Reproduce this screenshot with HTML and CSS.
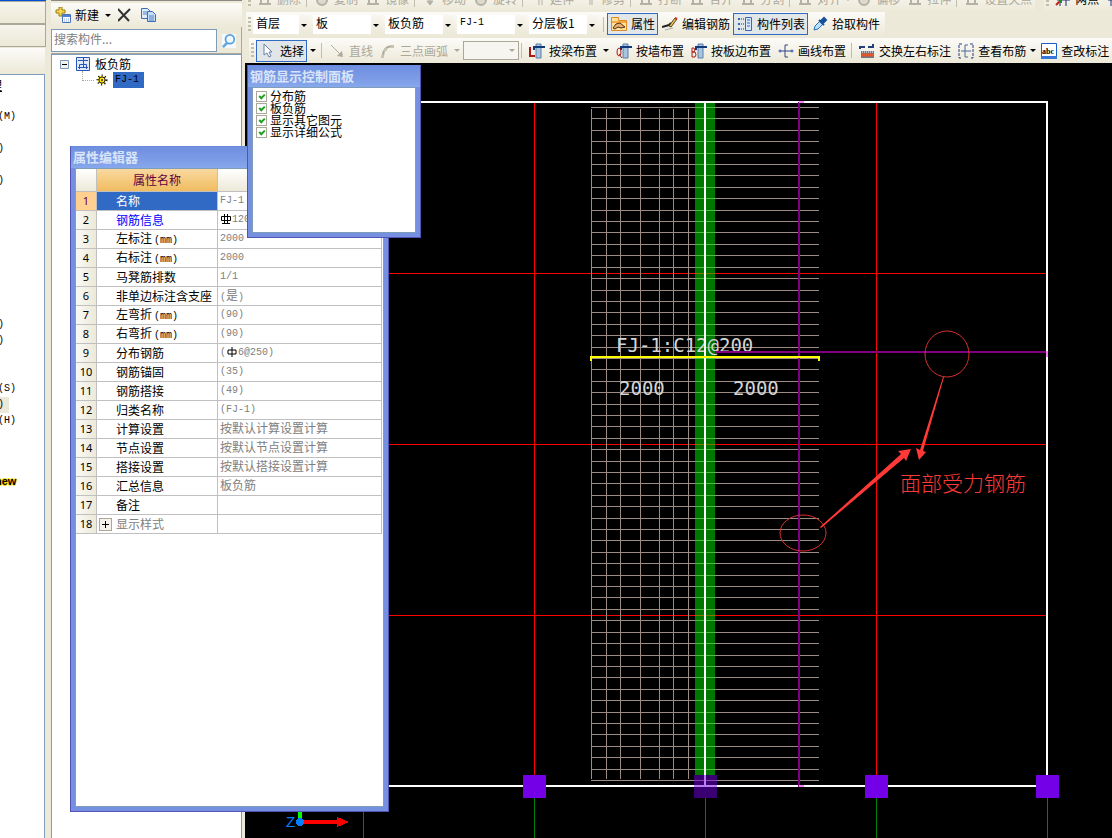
FILE: index.html
```html
<!DOCTYPE html>
<html lang="zh-CN">
<head>
  <meta charset="UTF-8">
  <title>板负筋</title>
  <link rel="stylesheet" href="styles.css">
</head>
<body>
  <svg class="defs" aria-hidden="true">
    <defs>
      <symbol id="i-beam" viewBox="0 0 16 16"><path d="M5 1h5v14H5z" fill="#a9c4de" stroke="#5a7fa8"/><path d="M3 7V4h13v3" fill="none" stroke="#123a7a" stroke-width="2"/></symbol>
      <symbol id="i-gray" viewBox="0 0 16 16"><path d="M2 13h12M4 4v9M11 4v9M4 8h7" fill="none" stroke="#b5b2a5" stroke-width="2"/></symbol>
      <symbol id="i-round" viewBox="0 0 16 16"><circle cx="8" cy="9" r="5" fill="#ddd9cc" stroke="#b5b2a5" stroke-width="2"/></symbol>
    </defs>
  </svg>
  <div class="app">
    <nav class="modules">
      <div class="module-tab"></div>
      <div class="module-tab"></div>
      <div class="module-tools"></div>
      <ul class="module-list">
        <li class="underlined">理</li>
        <li></li>
        <li>(M)</li>
        <li></li>
        <li>)</li>
        <li></li>
        <li>)</li>
        <li></li><li></li><li></li><li></li><li></li><li></li><li></li><li></li>
        <li>)</li>
        <li>)</li>
        <li></li><li></li>
        <li>(S)</li>
        <li class="current"><span>)</span></li>
        <li>(H)</li>
        <li></li><li></li><li></li>
        <li class="new">new</li>
      </ul>
    </nav>

    <aside class="components">
      <div class="bar">
        <button class="tool"><svg viewBox="0 0 16 16"><path d="M4 0h3v3h3v3H7v3H4V6H1V3h3z" fill="#f5d94a" stroke="#9b7a10"/><path d="M7.5 7.5h8v8h-8z" fill="#fff" stroke="#4a72b8"/><path d="M8 8h7v2H8z" fill="#4a80d8"/><path d="M9 12h5M9 14h5" stroke="#7fa6dd" stroke-dasharray="1 1"/></svg>新建</button>
        <button class="drop" aria-label="新建选项"></button>
        <button class="tool" aria-label="删除构件"><svg viewBox="0 0 16 16"><path d="M0 2l11 12M12 2L0 14" stroke="#333" stroke-width="2"/></svg></button>
        <button class="tool" aria-label="复制构件"><svg viewBox="0 0 16 16"><path d="M.5 1.5h6l3 3v7h-9z" fill="#dceafa" stroke="#3c6cb4"/><path d="M6.5 4.5h5l3 3v7h-8z" fill="#c4dcf6" stroke="#3c6cb4"/><path d="M2 5h4M2 7h4M8 9h5M8 11h5M8 13h5" stroke="#5485c8"/></svg></button>
      </div>
      <div class="search">
        <input type="text" placeholder="搜索构件..." aria-label="搜索构件">
        <button aria-label="搜索"><svg viewBox="0 0 16 16"><path d="M1 15l5-5" stroke="#6aa8dc" stroke-width="3"/><circle cx="9" cy="6" r="5" fill="#eef8ff" stroke="#58a0dc" stroke-width="2"/></svg></button>
      </div>
      <div class="tree">
        <div class="node">
          <svg class="toggle" viewBox="0 0 9 9"><path d="M.5.5h8v8h-8z" fill="#f4f2ea" stroke="#7b98b8"/><path d="M2 4.5h5" stroke="#000"/></svg>
          <svg class="kind" viewBox="0 0 14 14"><path d="M.5.5h13v13H.5z" fill="#dfeafc" stroke="#2856b8"/><path d="M7.5 1v9M2 3.5h10M3.5 12V7.5h7V12M2 10.5h10" fill="none" stroke="#2856b8"/></svg>
          <span>板负筋</span>
        </div>
        <div class="node child">
          <svg class="gear" viewBox="0 0 12 12"><circle cx="6" cy="6" r="4" fill="#ffe800" stroke="#222" stroke-width="3" stroke-dasharray="1 2"/><circle cx="6" cy="6" r="3" fill="#ffe800" stroke="#333"/><circle cx="6" cy="6" r="1" fill="#333"/></svg>
          <span class="selected num">FJ-1</span>
        </div>
      </div>
    </aside>

    <main class="workspace">
      <div class="toolbars">
        <div class="row row-clipped">
          <div class="bar disabled">
            <i class="grip"></i>
            <button class="tool" disabled><svg><use href="#i-gray"/></svg>删除</button><i class="sep"></i>
            <button class="tool" disabled><svg><use href="#i-round"/></svg>复制</button>
            <button class="tool" disabled><svg><use href="#i-gray"/></svg>镜像</button><i class="sep"></i>
            <button class="tool" disabled><svg viewBox="0 0 16 16"><path d="M8 3v9M5 10l3 4 3-4z" fill="#b5b2a5" stroke="#b5b2a5"/></svg>移动</button>
            <button class="tool" disabled><svg><use href="#i-round"/></svg>旋转</button><i class="sep"></i>
            <button class="tool" disabled><svg viewBox="0 0 16 16"><path d="M9 2v12M12 2v12" stroke="#b5b2a5"/></svg>延伸</button>
            <button class="tool" disabled><svg viewBox="0 0 16 16"><path d="M9 2v12M11 2v12" stroke="#b5b2a5"/></svg>修剪</button><i class="sep"></i>
            <button class="tool" disabled><svg><use href="#i-gray"/></svg>打断</button>
            <button class="tool" disabled><svg><use href="#i-gray"/></svg>合并</button>
            <button class="tool" disabled><svg><use href="#i-gray"/></svg>分割</button><i class="sep"></i>
            <button class="tool" disabled><svg><use href="#i-gray"/></svg>对齐</button>
            <button class="drop narrow" disabled aria-label="对齐选项"></button>
            <button class="tool" disabled><svg><use href="#i-round"/></svg>偏移</button>
            <button class="tool" disabled><svg><use href="#i-gray"/></svg>拉伸</button><i class="sep"></i>
            <button class="tool" disabled><svg><use href="#i-gray"/></svg>设置夹点</button>
          </div>
          <div class="bar rest">
            <i class="grip"></i>
            <button class="tool"><svg viewBox="0 0 16 16"><path d="M5 2v13M11 2v13M2 9h13" stroke="#1c2c78"/><path d="M1 14l4-4" stroke="#c02020" stroke-width="2"/><path d="M4 9h3v3H4z" fill="#189028"/></svg>两点</button>
            <button class="tool"><svg viewBox="0 0 16 16"><path d="M5 2v13M2 9h13" stroke="#1c2c78"/></svg>平行</button>
          </div>
        </div>

        <div class="row row-selects">
          <div class="bar">
            <i class="grip"></i>
            <label class="combo short"><select aria-label="楼层"><option>首层</option></select></label>
            <label class="combo"><select aria-label="构件类型"><option>板</option></select></label>
            <label class="combo"><select aria-label="构件"><option>板负筋</option></select></label>
            <label class="combo"><select class="num" aria-label="构件名称"><option>FJ-1</option></select></label>
            <label class="combo"><select aria-label="分层"><option>分层板1</option></select></label>
            <i class="sep"></i>
            <button class="tool pressed"><svg viewBox="0 0 16 16"><path d="M.5 1.5h7v3h8v10H.5z" fill="#ffe2a0" stroke="#e08a20"/><path d="M1 5h14v2H1z" fill="#f7a840"/><path d="M2 12l3-4 4-1 5 4-4 1-3-1-3 2z" fill="#e8b070" stroke="#503010"/></svg>属性</button>
            <button class="tool"><svg viewBox="0 0 16 16"><path d="M0 11l7-2 2-2" fill="none" stroke="#222" stroke-width="2"/><path d="M7 10l6-8 2 1-6 8z" fill="#e8c860" stroke="#5a3a10"/><path d="M13 2l2 1" stroke="#c03020" stroke-width="2"/><path d="M3 14l8-2" stroke="#aaa"/></svg>编辑钢筋</button>
            <button class="tool pressed"><svg viewBox="0 0 16 16"><path d="M8.5 1.5h6v13h-6z" fill="#d8e8fa" stroke="#3a68b0"/><path d="M10 4h3M10 7h3M10 10h3" stroke="#3a68b0"/><path d="M1 3h2M1 8h2M1 13h2" stroke="#3a68b0" stroke-width="2"/><path d="M4 3h3M4 8h3M4 13h3" stroke="#333" stroke-dasharray="1 1"/></svg>构件列表</button>
            <button class="tool"><svg viewBox="0 0 16 16"><path d="M2 14l1-4 5-5 3 3-5 5z" fill="#b8e0ff" stroke="#2870b8"/><path d="M7 4l5 5M9 5l3-3 2 2-3 3z" fill="#18509c" stroke="#18509c" stroke-width="2"/></svg>拾取构件</button>
          </div>
        </div>

        <div class="row">
          <div class="bar rest">
            <i class="grip"></i>
            <button class="tool pressed"><svg viewBox="0 0 16 16"><path d="M4 1v11l3-2 2 4 2-1-2-4h3z" fill="#fff" stroke="#6880a8"/></svg>选择</button>
            <button class="drop" aria-label="选择选项"></button>
            <i class="sep"></i>
            <button class="tool" disabled><svg viewBox="0 0 16 16"><path d="M2 2l9 9" stroke="#b0ac9c"/><path d="M14 14l-6-1 5-5z" fill="#b0ac9c"/></svg>直线</button>
            <button class="tool" disabled><svg viewBox="0 0 16 16"><path d="M3 13Q3 4 12 3" fill="none" stroke="#b0ac9c" stroke-width="2"/><path d="M1 12h3v3H1zM4 5h3v3H4zM11 2h3v3h-3z" fill="#c8c4b4"/></svg>三点画弧</button>
            <button class="drop" disabled aria-label="画弧选项"></button>
            <label class="combo boxed"><select disabled aria-label="半径"><option></option></select></label>
            <i class="sep"></i>
            <button class="tool"><svg viewBox="0 0 16 16"><path d="M1 4v9h5" fill="none" stroke="#b01818" stroke-width="2"/><use href="#i-beam" width="16" height="16" x="2"/></svg>按梁布置</button>
            <button class="drop" aria-label="按梁布置选项"></button>
            <button class="tool"><svg viewBox="0 0 16 16"><use href="#i-beam" width="16" height="16" x="2"/><ellipse cx="3" cy="9" rx="2" ry="4" fill="none" stroke="#b01818"/><path d="M3 11l3 4" stroke="#b01818"/></svg>按墙布置</button>
            <button class="tool"><svg viewBox="0 0 16 16"><use href="#i-beam" width="16" height="16" x="2"/><path d="M1 5v9M1 5h2q2 2 0 4H1h3q2 3 0 5H1" fill="none" stroke="#b01818"/></svg>按板边布置</button>
            <button class="tool"><svg viewBox="0 0 16 16"><path d="M2 8h12M10 2H7v12h3" fill="none" stroke="#304880"/><circle cx="2" cy="8" r="1" fill="#fff" stroke="#2848b0"/><circle cx="14" cy="8" r="1" fill="#fff" stroke="#2848b0"/></svg>画线布置</button>
            <i class="sep"></i>
            <button class="tool"><svg viewBox="0 0 16 16"><path d="M1 6V4h5M9 4h5V1" fill="none" stroke="#23407c" stroke-width="2"/><path d="M2 8h13v7H2z" fill="#707888"/><path d="M3 12h11" stroke="#e85a28" stroke-width="3" stroke-dasharray="1 1"/><path d="M3 9h11" stroke="#fff" stroke-dasharray="1 1"/></svg>交换左右标注</button>
            <button class="tool"><svg viewBox="0 0 16 16"><path d="M4 1H1v14h3M12 1h3v14h-3" fill="none" stroke="#2a3c78" stroke-dasharray="3 1"/><path d="M10 2H7v12h3M3 8h10" fill="none" stroke="#4a68a0"/></svg>查看布筋</button>
            <button class="drop narrow" aria-label="查看布筋选项"></button>
            <button class="tool"><svg viewBox="0 0 16 16"><path d="M.5.5h15v15H.5z" fill="#fff" stroke="#1c5cc8"/><path d="M0 13h16v3H0z" fill="#3478d8"/><text class="abc" x="1" y="11">abc</text></svg>查改标注</button>
          </div>
        </div>
      </div>

      <svg class="drawing">
        <g class="axis">
          <path d="M289.5 39V712M631.5 39V712M118 210.5H801M118 381.5H801M118 552.5H801"/>
        </g>
        <g class="axis-tail">
          <path d="M118.5 735V900M289.5 735V900M460.5 735V900M631.5 735V900M802.5 735V900"/>
        </g>
        <g id="mesh" class="mesh"></g>
        <path class="beam" d="M450 39h20v673h-20z"/>
        <g class="cad-text">
          <text x="371" y="289">FJ-1:C12@200</text>
          <text x="374" y="332">2000</text>
          <text x="488" y="332">2000</text>
        </g>
        <path class="edge" d="M118 39H802V723H118"/>
        <path class="edge" d="M460 39V723"/>
        <path class="rebar" d="M554 39V724M470 289H803"/>
        <path class="rebar-end" d="M554 39h5M554 723h5M802 288v6"/>
        <path class="label-line" d="M346 298V294H574V298"/>
        <g class="columns">
          <rect x="278" y="712" width="23" height="23"/>
          <rect class="faded" x="449" y="712" width="23" height="23"/>
          <rect x="620" y="712" width="23" height="23"/>
          <rect x="791" y="712" width="23" height="23"/>
        </g>
        <g class="notes">
          <ellipse cx="702" cy="291" rx="22" ry="23"/>
          <ellipse cx="558" cy="470" rx="23" ry="18"/>
          <path d="M698 314L675 387l-4-2 3 12 7-8-3-1 21-74z"/>
          <path d="M575 464L656 391l-3-3 13-2-5 12-2-3-83 70z"/>
          <text x="655" y="428">面部受力钢筋</text>
        </g>
        <g class="ucs">
          <path d="M55 747V759" stroke="#0f0" stroke-width="4"/>
          <path d="M58 759H93" stroke="#f00" stroke-width="4"/>
          <path d="M92 754l12 5-12 5z" fill="#f00"/>
          <circle cx="55" cy="759" r="4" fill="#0080ff"/>
          <text x="41" y="764">Z</text>
        </g>
      </svg>
    </main>

    <section class="window properties">
      <h2>属性编辑器</h2>
      <div class="window-body">
        <table>
          <thead>
            <tr><th class="no"></th><th class="name">属性名称</th><th></th></tr>
          </thead>
          <tbody>
            <tr class="active"><th>1</th><td>名称</td><td>FJ-1</td></tr>
            <tr class="link"><th>2</th><td>钢筋信息</td><td><svg class="bar-grade" viewBox="0 0 10 10"><path d="M3.5 0v9M6.5 0v9M1 9.5h8M.5 2.5h9v4h-9z" fill="none" stroke="#000"/></svg>120@200</td></tr>
            <tr><th>3</th><td>左标注<span class="num">(mm)</span></td><td>2000</td></tr>
            <tr><th>4</th><td>右标注<span class="num">(mm)</span></td><td>2000</td></tr>
            <tr><th>5</th><td>马凳筋排数</td><td>1/1</td></tr>
            <tr><th>6</th><td>非单边标注含支座</td><td>(<span class="cjk">是</span>)</td></tr>
            <tr><th>7</th><td>左弯折<span class="num">(mm)</span></td><td>(90)</td></tr>
            <tr><th>8</th><td>右弯折<span class="num">(mm)</span></td><td>(90)</td></tr>
            <tr><th>9</th><td>分布钢筋</td><td>(<svg class="bar-grade" viewBox="0 0 10 10"><path d="M5 0v10M1 3h8v4H1z" fill="none" stroke="#000"/></svg>6@250)</td></tr>
            <tr><th>10</th><td>钢筋锚固</td><td>(35)</td></tr>
            <tr><th>11</th><td>钢筋搭接</td><td>(49)</td></tr>
            <tr><th>12</th><td>归类名称</td><td>(FJ-1)</td></tr>
            <tr><th>13</th><td>计算设置</td><td><span class="cjk">按默认计算设置计算</span></td></tr>
            <tr><th>14</th><td>节点设置</td><td><span class="cjk">按默认节点设置计算</span></td></tr>
            <tr><th>15</th><td>搭接设置</td><td><span class="cjk">按默认搭接设置计算</span></td></tr>
            <tr><th>16</th><td>汇总信息</td><td><span class="cjk">板负筋</span></td></tr>
            <tr><th>17</th><td>备注</td><td></td></tr>
            <tr class="group"><th>18</th><td><button aria-label="展开"></button>显示样式</td><td></td></tr>
          </tbody>
        </table>
      </div>
    </section>

    <section class="window display">
      <h2>钢筋显示控制面板</h2>
      <div class="window-body">
        <label><input type="checkbox" checked>分布筋</label>
        <label><input type="checkbox" checked>板负筋</label>
        <label><input type="checkbox" checked>显示其它图元</label>
        <label><input type="checkbox" checked>显示详细公式</label>
      </div>
    </section>
  </div>
  <script src="mesh.js"></script>
</body>
</html>
```
FILE: styles.css
```css
*, *::before, *::after {
  box-sizing: border-box;
}
body {
  margin: 0;
  background: #ece9d8;
  color: #000;
  font: 12px/16px "Noto Sans CJK SC", sans-serif;
  overflow: hidden;
}
button, input, select {
  font: inherit;
  color: inherit;
  margin: 0;
}
button {
  border: 0;
  padding: 0;
  background: none;
}
.defs {
  position: absolute;
  width: 0;
  height: 0;
}
.num {
  font-family: "Liberation Mono", monospace;
  font-size: 10px;
}
.app {
  position: relative;
  display: flex;
  height: 100vh;
}

/* left module list */
.modules {
  flex: 0 0 46px;
  display: flex;
  flex-direction: column;
  border-top: 1px solid #0050d8;
}
.module-tab {
  height: 23px;
  border: 1px solid #aca899;
  border-width: 1px 1px 1px 0;
  background: linear-gradient(#f6f4ec, #ece9d8);
}
.module-tools {
  height: 26px;
  margin: 1px 1px 0 0;
  background: linear-gradient(#fcfbf8, #ece9d8);
}
.module-list {
  flex: 1;
  margin: 0 1px 0 0;
  padding: 2px 0 0;
  background: #fff;
  border: 1px solid #7f9db9;
  border-width: 1px 1px 0 0;
  list-style: none;
  overflow: hidden;
  font: 10px/16px "Liberation Mono", monospace;
}
.module-list li {
  height: 16px;
  text-indent: -2px;
}
.module-list .underlined {
  text-indent: -10px;
  font: 12px/16px "Noto Sans CJK SC", sans-serif;
  text-decoration: underline;
}
.module-list .current span {
  display: block;
  width: 9px;
  background: #ece9d8;
}
.module-list .new {
  font: bold 11px/8px "Liberation Sans", sans-serif;
  text-indent: -5px;
  text-shadow: 1px 0 #fd0, -1px 0 #fd0, 0 1px #fd0, 0 -1px #fd0;
}

/* component list */
.components {
  flex: 0 0 191px;
  display: flex;
  flex-direction: column;
  margin: 0 3px 0 5px;
  border-top: 1px solid #8a8880;
}
.bar {
  display: flex;
  align-items: center;
  background: linear-gradient(#fcfbf8, #ece9d8);
}
.components .bar {
  height: 24px;
  margin-top: 2px;
}
.search {
  display: flex;
  height: 27px;
  padding: 2px 0 1px;
  border: 1px solid #aca899;
  border-width: 0 1px 1px 0;
}
.search input {
  flex: 1;
  min-width: 0;
  padding: 0 2px 4px;
  border: 1px solid #7f9db9;
  border-radius: 0;
  background: #fff;
}
.search input::placeholder {
  color: #808080;
}
.search button {
  width: 24px;
  display: flex;
  align-items: center;
  justify-content: center;
}
.search svg {
  width: 14px;
  height: 14px;
  background: #f4faff;
}
.tree {
  flex: 1;
  padding: 1px 0 0 8px;
  border: 1px solid #7f9db9;
  border-bottom: 0;
  background: #fff;
}
.node {
  display: flex;
  align-items: center;
  height: 16px;
}
.toggle {
  width: 9px;
  height: 9px;
  margin-right: 7px;
}
.kind {
  width: 14px;
  height: 14px;
  margin-right: 5px;
}
.child {
  margin-left: 22px;
}
.child::before {
  content: "";
  width: 12px;
  height: 10px;
  margin: -8px 2px 0 0;
  border: 1px dotted #aca899;
  border-width: 0 0 1px 1px;
}
.gear {
  width: 12px;
  height: 12px;
  margin-right: 5px;
}
.selected {
  width: 31px;
  padding-left: 2px;
  background: #316ac5;
}

/* toolbars */
.workspace {
  flex: 1;
  min-width: 0;
  display: flex;
  flex-direction: column;
}
.row {
  display: flex;
  gap: 9px;
  height: 25px;
  margin-left: 4px;
  overflow: hidden;
}
.row-clipped {
  height: 26px;
  margin: -14px 0 0 1px;
}
.row-selects {
  height: 24px;
  margin: 0 0 2px 1px;
}
.row-selects .bar {
  padding-right: 2px;
}
.rest {
  flex: 1;
  min-width: 0;
}
.grip {
  flex: none;
  width: 3px;
  height: 15px;
  margin: 0 2px;
  background: repeating-linear-gradient(#c1bda9 0 2px, transparent 2px 4px);
}
.sep {
  flex: none;
  width: 1px;
  height: 15px;
  margin: 0 3px 0 2px;
  background: #c1beae;
}
.tool {
  flex: none;
  display: flex;
  align-items: center;
  gap: 4px;
  height: 22px;
  padding: 0 3px 0 4px;
  white-space: nowrap;
}
.tool svg {
  flex: none;
  width: 16px;
  height: 16px;
}
.tool:disabled {
  color: #aca899;
}
.pressed {
  padding: 0 2px 0 3px;
  border: 1px solid #316ac5;
  background: #e1e6e8;
}
.drop {
  flex: none;
  width: 12px;
  height: 22px;
}
.narrow {
  width: 8px;
}
.drop::before, .combo::after {
  content: "";
  display: block;
  width: 6px;
  height: 3px;
  margin: auto;
  border: 3px solid transparent;
  border-top-color: #000;
  border-bottom: 0;
}
.drop:disabled::before, .boxed::after {
  border-top-color: #aca899;
}
.combo {
  position: relative;
  flex: none;
  width: 69px;
  height: 19px;
  margin-right: 3px;
  background: #fff;
}
.short {
  width: 57px;
}
.combo select {
  display: block;
  width: 100%;
  height: 100%;
  padding: 0 12px 2px 3px;
  border: 0;
  border-radius: 0;
  appearance: none;
  background: linear-gradient(#f8f6f0, #ece9d8) right / 11px 100% no-repeat;
}
.combo::after {
  position: absolute;
  right: 3px;
  top: 9px;
}
.boxed {
  width: 56px;
  margin-right: 0;
  border: 1px solid #aca899;
}
.boxed select {
  background: #f3f1e8;
}
.boxed::after {
  top: 7px;
}
.abc {
  font: bold 8px "Liberation Serif", serif;
}

/* drawing area */
.drawing {
  flex: 1;
  min-height: 0;
  width: 100%;
  background: #000;
  shape-rendering: crispEdges;
}
.drawing path {
  fill: none;
}
.axis {
  stroke: #f00;
}
.axis-tail {
  stroke: #008000;
}
.mesh {
  stroke: #9c8c84;
}
.cad-text {
  fill: #d4d4d4;
  font: 19px "DejaVu Sans Mono", monospace;
}
.drawing .beam {
  fill: #00f000;
  fill-opacity: 0.5;
}
.edge {
  stroke: #fff;
  stroke-width: 2;
}
.rebar {
  stroke: #800080;
  stroke-width: 2;
}
.rebar-end {
  stroke: #ff80ff;
  stroke-width: 2;
}
.label-line {
  stroke: #ff0;
  stroke-width: 2;
}
.columns {
  fill: #7300e6;
}
.faded {
  fill-opacity: 0.5;
}
.notes {
  shape-rendering: auto;
}
.notes ellipse {
  fill: none;
  stroke: #d83030;
}
.drawing .notes path {
  fill: #ff3838;
}
.notes text {
  fill: #ff3838;
  font: 300 21px "Noto Sans CJK SC", sans-serif;
}
.drawing .ucs path[fill] {
  fill: #f00;
}
.ucs text {
  fill: #0080ff;
  font: 15px "Liberation Sans", sans-serif;
}

/* floating windows */
.window {
  position: absolute;
  display: flex;
  flex-direction: column;
  padding: 0 4px 4px;
  border: 1px solid #5353b5;
  border-top-color: #6a8ce0;
  background: #7590e0;
}
.window h2 {
  height: 21px;
  margin: 0 -4px;
  padding: 2px;
  background: linear-gradient(#6f8fe0, #7d9be6 60%, #86a8ec);
  color: #d8e4f8;
  font-size: 13px;
  line-height: 16px;
}
.window-body {
  flex: 1;
  background: #fff;
  border: 1px solid #7f9db9;
}
.properties {
  left: 70px;
  top: 146px;
  width: 319px;
  height: 666px;
}
.display {
  left: 247px;
  top: 65px;
  width: 174px;
  height: 173px;
}
table {
  width: 306px;
  border-collapse: separate;
  border-spacing: 0;
  table-layout: fixed;
}
th, td {
  height: 19px;
  padding: 0;
  border: 1px solid #c0c0c0;
  border-width: 0 1px 1px 0;
  font-weight: normal;
  line-height: 14px;
  text-align: left;
  white-space: nowrap;
}
thead th {
  height: 23px;
  background: linear-gradient(#fff, #ece9d8);
}
thead .no {
  width: 21px;
}
thead .name {
  width: 121px;
  background: linear-gradient(#f9d9a0, #f0bc60);
  color: #600040;
  text-align: center;
}
tbody th {
  background: linear-gradient(90deg, #fafaf6, #ece9d8);
  font-family: "Noto Sans", sans-serif;
  font-size: 11px;
  text-align: center;
}
td:nth-child(2) {
  position: relative;
  padding-left: 19px;
}
td .num {
  margin-left: 2px;
}
td:last-child {
  padding-left: 2px;
  color: #808080;
  font: 10px/14px "Liberation Mono", monospace;
}
td .cjk {
  font: 12px/14px "Noto Sans CJK SC", sans-serif;
}
.active th {
  background: #ffd090;
  color: #600040;
}
.active td:nth-child(2) {
  background: #316ac5;
  color: #fff;
}
.link td:nth-child(2) {
  color: #00f;
}
.group td {
  color: #808080;
}
.group button {
  position: absolute;
  left: 2px;
  top: 3px;
  width: 13px;
  height: 13px;
  border: 1px solid #aca899;
  background: linear-gradient(#000, #000) center / 7px 1px no-repeat, linear-gradient(#000, #000) center / 1px 7px no-repeat, #f4f2ea;
}
.bar-grade {
  width: 10px;
  height: 10px;
  margin: 0 1px;
  vertical-align: -2px;
}
.display .window-body {
  padding: 2px 3px;
}
.display label {
  display: flex;
  align-items: center;
  gap: 3px;
  height: 12px;
  line-height: 12px;
}
.display input {
  position: relative;
  width: 11px;
  height: 11px;
  border: 1px solid #aca899;
  appearance: none;
  background: #fff;
}
.display input:checked::after {
  content: "";
  position: absolute;
  left: 3px;
  top: 1px;
  width: 4px;
  height: 6px;
  border: solid #21a121;
  border-width: 0 2px 2px 0;
  transform: rotate(45deg);
}
```
FILE: mesh.js
```js
var mesh = document.getElementById('mesh');

function addLine(d) {
  var path = document.createElementNS('http://www.w3.org/2000/svg', 'path');
  path.setAttribute('d', d);
  mesh.appendChild(path);
}

// distribution bars, 60 rows between the two slab edges
for (var i = 0; i < 60; i++) {
  var y = 44 + Math.round(i * 673 / 59) + 0.5;
  addLine('M346 ' + y + 'H574');
}

[346, 361, 375, 395, 414, 428, 443].forEach(function (x) {
  addLine('M' + (x + 0.5) + ' 46V716');
});
```
